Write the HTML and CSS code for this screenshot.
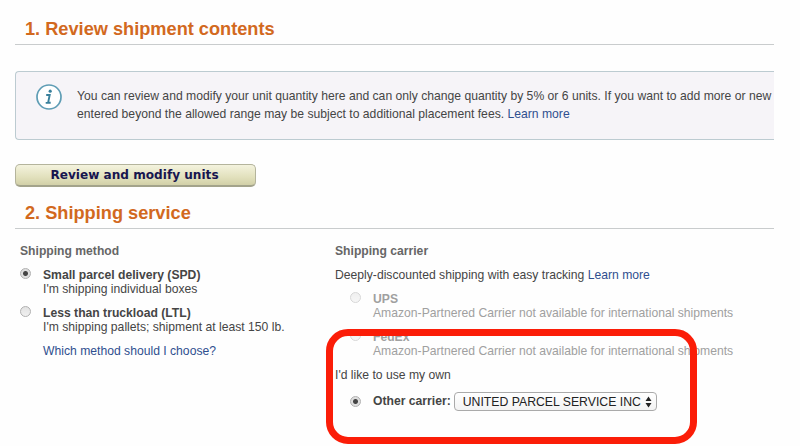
FILE: index.html
```html
<!DOCTYPE html>
<html lang="en">
<head>
    <meta charset="UTF-8">
    <title>Send to Amazon - Shipping service</title>
    <link rel="stylesheet" href="styles.css">
</head>
<body>
    <main>
        <h2>1. Review shipment contents</h2>
        <div class="info-box">
            <svg class="info-icon" width="26" height="26" viewBox="0 0 26 26">
                <circle cx="13" cy="13" r="12" fill="#fff" stroke="#5f9db5" stroke-width="1.7"/>
                <circle cx="14.2" cy="7.2" r="1.6" fill="#39809c"/>
                <path d="M10.2 11h3.5l-1.6 7.8h2.6M9.7 18.9h2.6" fill="none" stroke="#39809c" stroke-width="1.9"/>
            </svg>
            <div class="info-text">
                <div>You can review and modify your unit quantity here and can only change quantity by 5% or 6 units. If you want to add more or new</div>
                <div>entered beyond the allowed range may be subject to additional placement fees. <a href="#">Learn more</a></div>
            </div>
        </div>
        <button class="review-button">Review and modify units</button>
        <h2 class="second">2. Shipping service</h2>
        <div class="columns">
            <section class="method">
                <h3>Shipping method</h3>
                <div class="option">
                    <span class="radio checked"></span>
                    <div><b>Small parcel delivery (SPD)</b><br>I'm shipping individual boxes</div>
                </div>
                <div class="option">
                    <span class="radio"></span>
                    <div><b>Less than truckload (LTL)</b><br>I'm shipping pallets; shipment at least 150 lb.</div>
                </div>
                <a class="which" href="#">Which method should I choose?</a>
            </section>
            <section class="carrier">
                <h3>Shipping carrier</h3>
                <p>Deeply-discounted shipping with easy tracking <a href="#">Learn more</a></p>
                <div class="option disabled">
                    <span class="radio"></span>
                    <div><b>UPS</b><br>Amazon-Partnered Carrier not available for international shipments</div>
                </div>
                <div class="option disabled">
                    <span class="radio"></span>
                    <div><b>FedEx</b><br>Amazon-Partnered Carrier not available for international shipments</div>
                </div>
                <p class="own">I'd like to use my own</p>
                <div class="other">
                    <span class="radio checked"></span>
                    <b>Other carrier:</b>
                    <div class="select">
                        <span>UNITED PARCEL SERVICE INC</span>
                        <svg width="7" height="12" viewBox="0 0 7 12">
                            <path d="M3.5 0.5L6.5 5h-6zM3.5 11.5L6.5 7h-6z" fill="#222"/>
                        </svg>
                    </div>
                </div>
            </section>
        </div>
    </main>
    <div class="highlight"></div>
</body>
</html>
```
FILE: styles.css
```css
body {
    margin: 0;
    width: 800px;
    height: 446px;
    overflow: hidden;
    position: relative;
    background-color: #fefefe;
    font-family: "Liberation Sans", Arial, sans-serif;
    font-size: 12.16px;
    line-height: 14px;
    color: #454545;
}
main {
    width: 759px;
    padding: 16px 0 0 15px;
}
a {
    color: #2f4f8f;
    text-decoration: none;
}
h2 {
    margin: 0;
    height: 28px;
    padding-left: 10px;
    border-bottom: 1px solid #c9cccd;
    font-size: 18.2px;
    line-height: 27px;
    color: #d2691e;
}
.info-box {
    display: flex;
    box-sizing: border-box;
    height: 69px;
    margin-top: 26px;
    padding: 12px 0 0 20px;
    border: 1px solid #bccbd1;
    border-right: none;
    border-radius: 4px 0 0 4px;
    background-color: #f6f4f8;
}
.info-text {
    margin: 4px 0 0 15px;
    line-height: 17.5px;
    white-space: nowrap;
}
.review-button {
    display: block;
    width: 241px;
    height: 23px;
    margin-top: 24px;
    padding: 0 2px 0 0;
    border: 1px solid #b4b49c;
    border-bottom: 2px solid #a3a38b;
    border-radius: 5px;
    background: linear-gradient(#f4f3de, #e2e1bd 60%, #d2d0a8);
    font-family: "DejaVu Sans", Verdana, sans-serif;
    font-size: 12.1px;
    font-weight: bold;
    color: #17154f;
}
h2.second {
    margin-top: 13px;
}
.columns {
    display: flex;
    padding: 15px 0 0 5px;
}
.method {
    width: 315px;
}
h3 {
    margin: 0;
    font-size: 12.15px;
    line-height: 14px;
    color: #666;
}
.option {
    display: flex;
    margin-top: 10px;
}
.radio {
    box-sizing: border-box;
    flex: none;
    width: 11px;
    height: 11px;
    margin-right: 12px;
    border: 1px solid #b0b0b0;
    border-radius: 50%;
    background: linear-gradient(#e2e2e2, #f0f0f0);
}
.radio.checked {
    background: radial-gradient(circle, #444 0, #444 2px, #dedede 3px);
}
.which {
    display: block;
    margin: 10px 0 0 23px;
}
p {
    margin: 10px 0 0;
}
.carrier {
    white-space: nowrap;
}
.carrier .option {
    padding-left: 15px;
}
.disabled {
    color: #a0a0a0;
}
.disabled .radio {
    opacity: 0.5;
}
.other {
    display: flex;
    align-items: center;
    margin-top: 10px;
    padding-left: 15px;
}
.other b {
    margin-top: -2px;
}
.select {
    display: flex;
    align-items: center;
    justify-content: space-between;
    box-sizing: border-box;
    width: 203px;
    height: 19px;
    margin-left: 3px;
    padding: 0 4px 0 8px;
    border: 1px solid #aaa;
    border-radius: 4px;
    background: linear-gradient(#fff, #f3f3f3);
    font-size: 12.25px;
    color: #222;
}
/* red marker around the carrier choice */
.highlight {
    position: absolute;
    left: 326px;
    top: 329px;
    box-sizing: border-box;
    width: 371px;
    height: 115px;
    border: 7px solid #fb1d08;
    border-radius: 22px;
}
```
